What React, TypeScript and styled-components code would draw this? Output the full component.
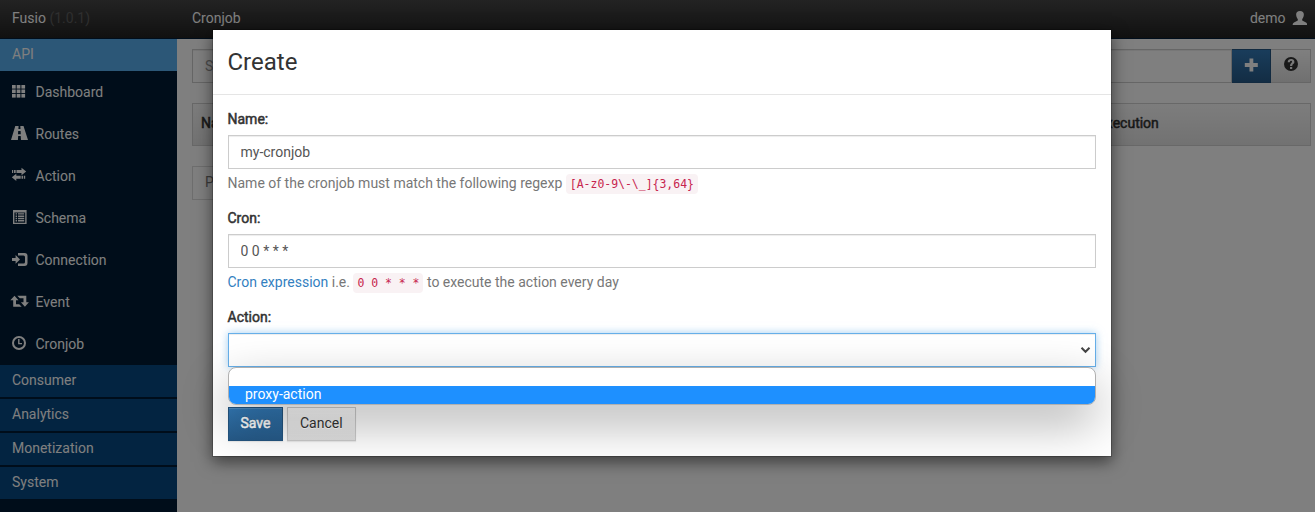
import React from "react";
import styled, { createGlobalStyle, css } from "styled-components";

const GlobalStyle = createGlobalStyle`
  * { box-sizing: border-box; }
  html, body { margin: 0; padding: 0; }
  body {
    background: #fff;
    color: #333;
    font: 14px/20px Roboto, "Liberation Sans", sans-serif;
    overflow: hidden;
  }
  input, select, button { font-family: inherit; font-size: inherit; }
`;

const emphasis = css`
  font-weight: 400;
  -webkit-text-stroke: 0.5px currentColor;
`;

const Page = styled.div`
  display: flex;
  flex-direction: column;
  height: 512px;
`;

const Navbar = styled.header`
  display: flex;
  align-items: center;
  flex: none;
  height: 39px;
  padding: 0 8px 2px 12px;
  background: linear-gradient(to bottom, #464646 0, #222 100%);
  border-bottom: 1px solid #001c38;
  color: #fff;
`;

const Brand = styled.div`
  width: 180px;
  span { color: #5e5e5e; }
`;

const PageTitle = styled.div`
  flex: 1;
`;

const User = styled.div`
  display: flex;
  align-items: center;
  gap: 6.5px;
  svg { margin-top: -1px; }
`;

const Columns = styled.div`
  display: flex;
  flex: 1;
  min-height: 0;
`;

const Sidebar = styled.nav`
  width: 177px;
  flex: none;
  background: #001b34;
`;

const Group = styled.div<{ $active?: boolean }>`
  height: 32px;
  margin-bottom: ${(p) => (p.$active ? 0 : 2)}px;
  padding: 5px 12px;
  background: ${(p) => (p.$active ? "#58aeee" : "#064882")};
  color: #fff;
`;

const Item = styled.div`
  display: flex;
  align-items: center;
  height: 42px;
  padding-left: 11px;
  gap: 7.5px;
  color: #fff;
`;

const Content = styled.main`
  flex: 1;
  padding: 10px 4px 0 15px;
`;

const Row = styled.div`
  display: flex;
`;

const SearchBox = styled.div`
  flex: 1;
  height: 34px;
  padding: 6px 12px;
  border: 1px solid #ccc;
  box-shadow: inset 0 1px 1px rgba(0, 0, 0, 0.075);
  color: #999;
`;

const IconButton = styled.button<{ $primary?: boolean }>`
  display: flex;
  align-items: center;
  justify-content: center;
  width: 40px;
  height: 34px;
  padding: 0 0 4px;
  color: #333;
  background: linear-gradient(to bottom, #fff 0, #e0e0e0 100%);
  border: 1px solid #ccc;
  border-left: 0;
  ${(p) =>
    p.$primary &&
    css`
      width: 39px;
      padding-bottom: 3px;
      color: #fff;
      background: linear-gradient(to bottom, #337ab7 0, #265a88 100%);
      border-color: #245580;
    `}
`;

const TableHead = styled.div`
  display: grid;
  grid-template-columns: 867px 1fr;
  height: 43px;
  margin-top: 20px;
  padding: 9px 8px;
  border: 1px solid #d0d0d0;
  background: linear-gradient(to bottom, #fafafa 0, #e4e4e4 100%);
  ${emphasis}
`;

const Pager = styled.div`
  width: 100px;
  height: 34px;
  margin-top: 20px;
  padding: 5px 12px;
  border: 1px solid #ddd;
  color: #777;
`;

const Backdrop = styled.div`
  position: absolute;
  inset: 0;
  height: 512px;
  overflow: hidden;
  background: rgba(0, 0, 0, 0.5);
`;

const Dialog = styled.section`
  width: 900px;
  margin: 29px 0 0 212px;
  background: #fff;
  background-clip: padding-box;
  border: 1px solid rgba(0, 0, 0, 0.2);
  box-shadow: 0 5px 15px rgba(0, 0, 0, 0.5);
`;

const DialogHeader = styled.h3`
  height: 65px;
  margin: 0;
  padding: 15px 14.5px;
  border-bottom: 1px solid #e5e5e5;
  font-size: 24px;
  font-weight: 400;
  line-height: 34px;
`;

const DialogBody = styled.div`
  padding: 14px 15px 15px;
`;

const Field = styled.div`
  position: relative;
  margin-bottom: 15px;
`;

const Label = styled.label`
  display: block;
  margin: 0 0 6px -0.5px;
  ${emphasis}
`;

const control = css`
  display: block;
  width: 100%;
  height: 34px;
  padding: 6px 11.5px;
  border: 1px solid #ccc;
  background: #fff;
  color: #555;
  box-shadow: inset 0 1px 1px rgba(0, 0, 0, 0.075);
  outline: 0;
`;

const Input = styled.input`
  ${control}
`;

const SelectBox = styled.div`
  ${control}
  display: flex;
  align-items: center;
  justify-content: flex-end;
  padding: 0 4px;
  border-color: #66afe9;
  box-shadow: inset 0 1px 1px rgba(0, 0, 0, 0.075), 0 0 8px rgba(102, 175, 233, 0.6);
`;

const Help = styled.p`
  margin: 4px 0 0 -0.5px;
  height: 20px;
  color: #777;
`;

const Link = styled.a`
  color: #337fbf;
  text-decoration: none;
`;

const Code = styled.code`
  padding: 3px 4px;
  border-radius: 4px;
  background: #f9f2f4;
  color: #c7254e;
  font: 11.46px/1 "DejaVu Sans Mono", monospace;
`;

const Options = styled.div`
  position: absolute;
  top: 60px;
  left: 0;
  width: 100%;
  height: 38px;
  background: #fff;
  border: 1px solid #b0b0b0;
  border-radius: 8px;
  box-shadow: 0 18px 48px rgba(0, 0, 0, 0.32);
`;

const Option = styled.div<{ $selected?: boolean }>`
  height: 18px;
  padding-left: 16px;
  line-height: 17px;
  border-radius: 0 0 7px 7px;
  ${(p) => p.$selected && "background: #1e90ff; color: #fff;"}
`;

const Buttons = styled.div`
  display: flex;
  gap: 4px;
  padding-top: 1px;
`;

const Button = styled.button<{ $primary?: boolean }>`
  height: 34px;
  padding: 0 12px 2px;
  border: 1px solid #ccc;
  background: linear-gradient(to bottom, #fff 0, #e0e0e0 100%);
  color: #333;
  text-shadow: 0 1px 0 #fff;
  box-shadow: inset 0 1px 0 rgba(255, 255, 255, 0.15), 0 1px 1px rgba(0, 0, 0, 0.075);
  ${(p) =>
    p.$primary &&
    css`
      width: 55px;
      padding: 0 0 2px;
      border-color: #245580;
      background: linear-gradient(to bottom, #337ab7 0, #265a88 100%);
      color: #fff;
      text-shadow: 0 -1px 0 rgba(0, 0, 0, 0.2);
      ${emphasis}
    `}
`;

const glyphs: Record<string, React.ReactNode> = {
  grid: [2, 6.5, 11].map((y) =>
    [1, 5.7, 10.4].map((x) => <rect key={`${x}-${y}`} x={x} y={y} width="3.7" height="3.6" />)
  ),
  road: <path fillRule="evenodd" d="M4.3 1H7.6L7.4 4H9.5L9.3 1H12.5L17 15H10L9.7 11H7.2L6.9 15H0ZM7.2 6L7 9.3H9.8L9.6 6Z" />,
  transfer: <path d="M1 3H2.2V6H1ZM3 3H4.7V6H3ZM5.5 3H10.5V0.8L15.2 4.5L10.5 8.2V6H5.5ZM14.2 8.8H13V11.8H14.2ZM12.2 8.8H10.5V11.8H12.2ZM9.7 8.8H5.3V6.7L0.8 10.3L5.3 13.9V11.8H9.7Z" />,
  list: <path fillRule="evenodd" d="M2 1H15.6V15H2ZM3.4 3.4V13.8H14.2V3.4ZM4.6 4.2H6V5.6H4.6ZM7 4.2H13.2V5.6H7ZM4.6 6.5H6V7.9H4.6ZM7 6.5H13.2V7.9H7ZM4.6 8.8H6V10.2H4.6ZM7 8.8H13.2V10.2H7ZM4.6 11.1H6V12.5H4.6ZM7 11.1H13.2V12.5H7Z" />,
  login: <path d="M1 7H4.6V4L9 8.5L4.6 12.8V10H1ZM7 2H13.5Q16.5 2 16.5 5V12Q16.5 15 13.5 15H7V12.5H12.5Q14 12.5 14 11V6Q14 4.5 12.5 4.5H7Z" />,
  retweet: <path d="M3.5 2.7L7.5 7.2H5V11.2H8.2L10.7 13.8H2.2V7.2H-0.7ZM6.3 2.7H15.3V9.2H17.9L13.9 13.8L9.9 9.2H12.5V5.3H8.8Z" />,
  clock: (
    <g fill="none" stroke="currentColor">
      <circle cx="8" cy="8" r="6" strokeWidth="2" />
      <path d="M7.8 4V8.6H11" strokeWidth="1.4" />
    </g>
  ),
  user: <path d="M8 1C5.1 1 3.9 2.8 4.2 5.3C4.4 7.2 5.2 8.4 5.8 9V10.6L2 12.5Q0.6 13.2 0.6 15H15.2Q15.2 13.2 14 12.5L10.2 10.6V9C10.8 8.4 11.6 7.2 11.8 5.3C12.1 2.8 10.9 1 8 1Z" />,
  plus: <path d="M6.5 1.5H10.3V6H14.8V10H10.3V14.5H6.5V10H1.8V6H6.5Z" />,
  question: (
    <path
      fillRule="evenodd"
      d="M8 1A7 7 0 1 1 8 15A7 7 0 1 1 8 1ZM7 11V13H9.2V11ZM4.7 6.3H6.8Q6.8 4.8 8 4.8Q9.1 4.8 9.1 5.8Q9.1 6.4 8.3 7Q7 7.9 7 10H9.2Q9.2 8.8 10.2 8.1Q11.4 7.2 11.4 5.9Q11.3 3 8.2 3Q4.8 3 4.7 6.3Z"
    />
  ),
};

const Glyph = ({ name, width = 16 }: { name: string; width?: number }) => (
  <svg width={width} height="16" viewBox={`0 0 ${width} 16`} fill="currentColor" aria-hidden>
    {glyphs[name]}
  </svg>
);

const items = [
  ["grid", "Dashboard"],
  ["road", "Routes"],
  ["transfer", "Action"],
  ["list", "Schema"],
  ["login", "Connection"],
  ["retweet", "Event"],
  ["clock", "Cronjob"],
];

const NavIcon = styled.span`
  display: flex;
  width: 17px;
  margin-top: -2px;
  svg { flex: none; overflow: visible; }
`;

export default function App() {
  return (
    <>
      <GlobalStyle />
      <Page>
        <Navbar>
          <Brand>
            Fusio <span>(1.0.1)</span>
          </Brand>
          <PageTitle>Cronjob</PageTitle>
          <User>
            demo <Glyph name="user" width={15} />
          </User>
        </Navbar>
        <Columns>
          <Sidebar>
            <Group $active>API</Group>
            {items.map(([icon, label]) => (
              <Item key={label}>
                <NavIcon>
                  <Glyph name={icon} width={17} />
                </NavIcon>
                {label}
              </Item>
            ))}
            {["Consumer", "Analytics", "Monetization", "System"].map((g) => (
              <Group key={g}>{g}</Group>
            ))}
          </Sidebar>
          <Content>
            <Row>
              <SearchBox>Search</SearchBox>
              <IconButton $primary>
                <Glyph name="plus" />
              </IconButton>
              <IconButton>
                <Glyph name="question" />
              </IconButton>
            </Row>
            <TableHead>
              <span>Name</span>
              <span>Last execution</span>
            </TableHead>
            <Pager>Previous</Pager>
          </Content>
        </Columns>
      </Page>
      <Backdrop>
        <Dialog>
          <DialogHeader>Create</DialogHeader>
          <DialogBody>
            <Field>
              <Label>Name:</Label>
              <Input defaultValue="my-cronjob" />
              <Help>
                Name of the cronjob must match the following regexp <Code>[A-z0-9\-\_]{"{3,64}"}</Code>
              </Help>
            </Field>
            <Field>
              <Label>Cron:</Label>
              <Input defaultValue="0 0 * * *" />
              <Help>
                <Link>Cron expression</Link> i.e. <Code>0 0 * * *</Code> to execute the action every day
              </Help>
            </Field>
            <Field>
              <Label>Action:</Label>
              <SelectBox>
                <svg width="11" height="8" viewBox="0 0 11 8" fill="none" stroke="#444" strokeWidth="2">
                  <path d="M1.5 1.8L5.5 5.8L9.5 1.8" />
                </svg>
              </SelectBox>
              <Help />
              <Options>
                <Option />
                <Option $selected>proxy-action</Option>
              </Options>
            </Field>
            <Buttons>
              <Button $primary>Save</Button>
              <Button>Cancel</Button>
            </Buttons>
          </DialogBody>
        </Dialog>
      </Backdrop>
    </>
  );
}
